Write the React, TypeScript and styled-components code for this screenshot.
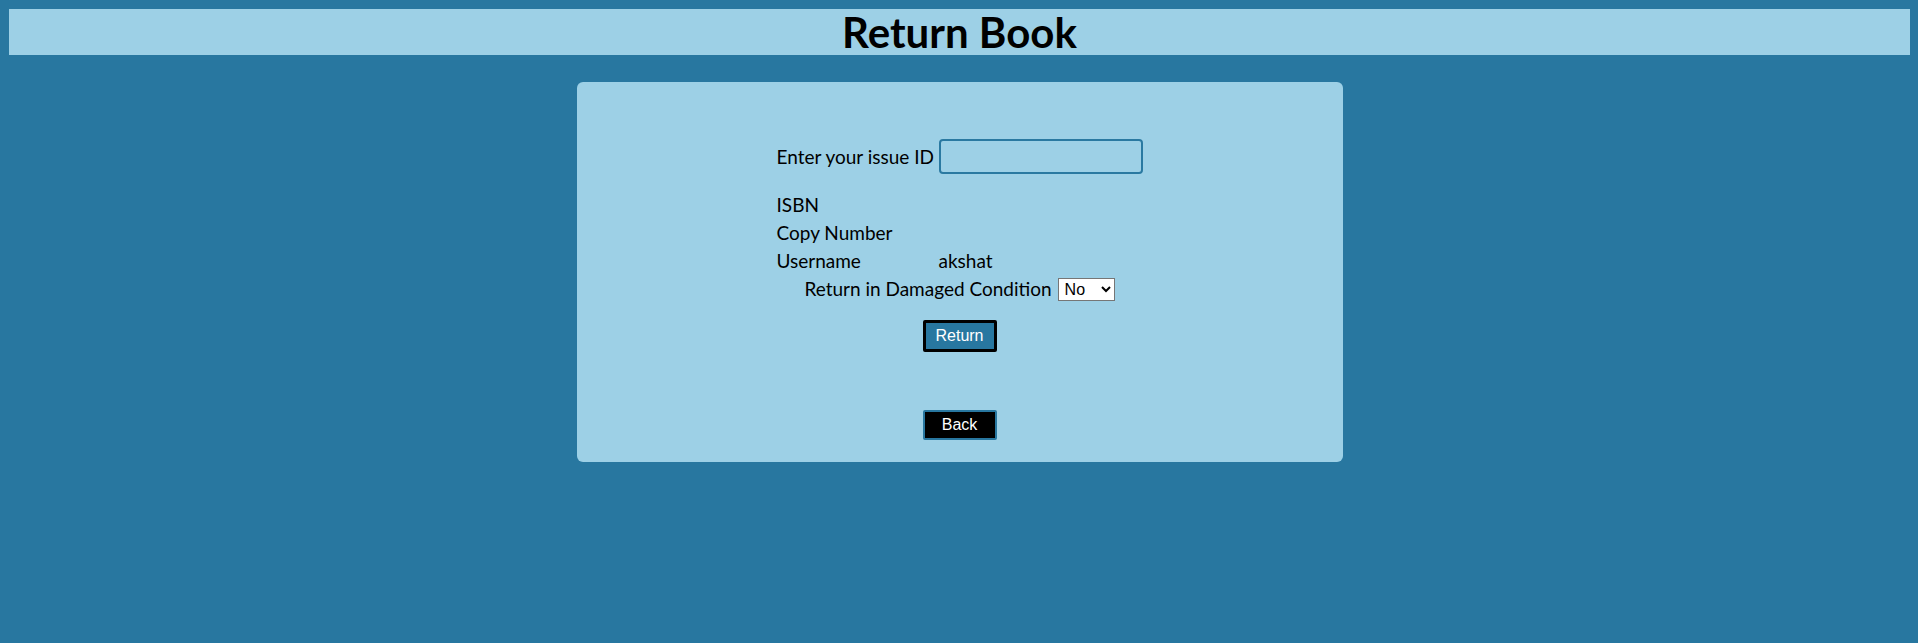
import React from 'react';
import styled, { createGlobalStyle } from 'styled-components';

const GlobalStyle = createGlobalStyle`
  html, body {
    margin: 0;
    background-color: #2877a0;
  }
  body {
    padding: 9px 8px 0 9px;
    min-height: 643px;
    box-sizing: border-box;
    font-family: 'Lato', 'Liberation Sans', sans-serif;
  }
`;

export default function App() {
  return (
    <>
      <GlobalStyle />
      <StyledHeader>
        <h1>Return Book</h1>
      </StyledHeader>
      <StyledCard>
        <StyledForm>
          <StyledLabel>Enter your issue ID</StyledLabel>
          <StyledInput type="text" />
          <StyledLabel $first>ISBN</StyledLabel>
          <StyledValue $first />
          <StyledLabel>Copy Number</StyledLabel>
          <StyledValue />
          <StyledLabel>Username</StyledLabel>
          <StyledValue>akshat</StyledValue>
          <StyledDamagedRow>
            Return in Damaged Condition
            <StyledSelect defaultValue="No">
              <option>No</option>
              <option>Yes</option>
            </StyledSelect>
          </StyledDamagedRow>
        </StyledForm>
        <StyledButton type="button" $variant="return">
          Return
        </StyledButton>
        <StyledButton type="button" $variant="back">
          Back
        </StyledButton>
      </StyledCard>
    </>
  );
}

const StyledHeader = styled.header`
  background-color: #9dd0e6;
  height: 46px;
  display: flex;
  justify-content: center;
  align-items: center;

  h1 {
    margin: 0;
    font-family: 'Lato', 'Liberation Sans', sans-serif;
    font-weight: 700;
    font-size: 42px;
    color: #000;
  }
`;

const StyledCard = styled.main`
  width: 766px;
  margin: 27px auto 0;
  padding: 57px 0 22px;
  box-sizing: border-box;
  background-color: #9dd0e6;
  border-radius: 6px;
  display: flex;
  flex-direction: column;
  align-items: center;
`;

const StyledForm = styled.div`
  display: grid;
  grid-template-columns: 162px 204px;
  align-items: center;
  color: #000;
  font-size: 19px;
`;

const StyledLabel = styled.span<{ $first?: boolean }>`
  line-height: 28px;
  margin-top: ${(p) => (p.$first ? '17px' : '0')};
`;

const StyledValue = styled.span<{ $first?: boolean }>`
  line-height: 28px;
  min-height: 28px;
  margin-top: ${(p) => (p.$first ? '17px' : '0')};
`;

const StyledInput = styled.input`
  width: 204px;
  height: 35px;
  box-sizing: border-box;
  border: 2px solid #2a79a1;
  border-radius: 4px;
  background: transparent;
  outline: none;
`;

const StyledDamagedRow = styled.div`
  grid-column: 1 / span 2;
  display: flex;
  justify-content: center;
  align-items: center;
  gap: 6px;
  line-height: 28px;
`;

const StyledSelect = styled.select`
  width: 57px;
  height: 23px;
  font-family: 'Liberation Sans', Arial, sans-serif;
  font-size: 16px;
  background: #fff;
  border: 1px solid #767676;
  border-radius: 0;
  padding: 0 0 0 2px;
`;

const StyledButton = styled.button<{ $variant: 'return' | 'back' }>`
  width: 74px;
  height: ${(p) => (p.$variant === 'return' ? '32px' : '30px')};
  margin-top: ${(p) => (p.$variant === 'return' ? '17px' : '58px')};
  box-sizing: border-box;
  font-family: 'Liberation Sans', Arial, sans-serif;
  font-size: 16px;
  color: #fff;
  cursor: pointer;
  border-radius: 2px;
  background-color: ${(p) => (p.$variant === 'return' ? '#2877a0' : '#000')};
  border: ${(p) =>
    p.$variant === 'return' ? '3px solid #000' : '2px solid #2877a0'};
`;
